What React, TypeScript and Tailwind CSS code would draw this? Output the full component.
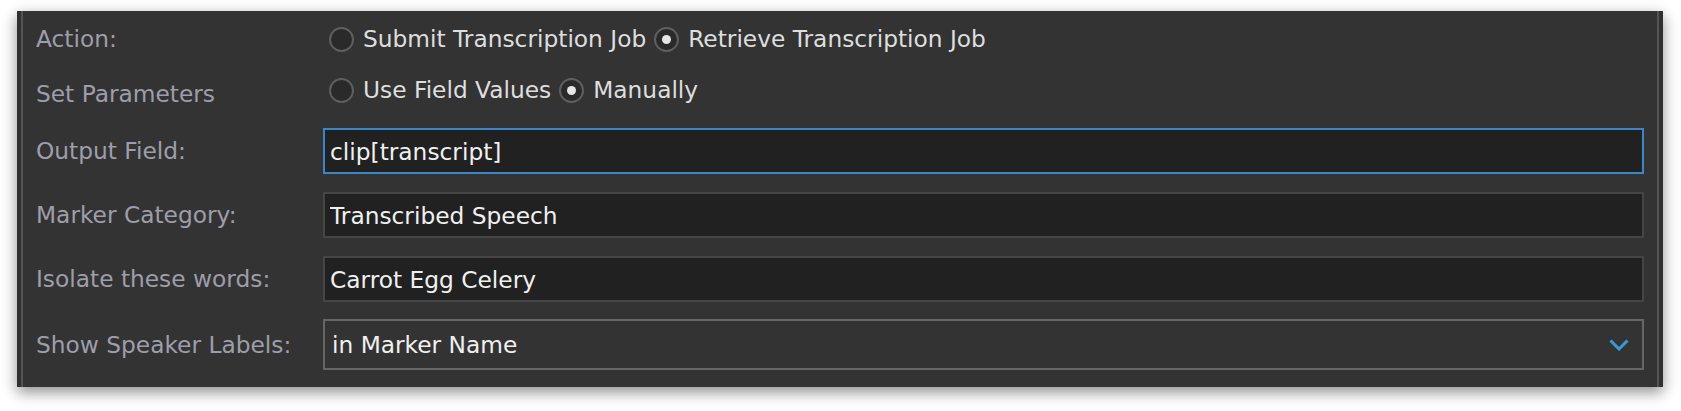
import { useState } from "react";

const Radio = ({ checked, label, onClick }: { checked: boolean; label: string; onClick: () => void }) => (
  <button type="button" onClick={onClick} className="flex items-center gap-[9px] mr-[8px]">
    <span className="flex items-center justify-center w-[25px] h-[25px] rounded-full border-2 border-[#5f5f5f] bg-[#2a2a2a]">
      {checked && <span className="w-[9px] h-[9px] rounded-full bg-[#e6e6e6]" />}
    </span>
    <span className="text-[#dedede]">{label}</span>
  </button>
);

const Label = ({ children, className = "" }: { children: string; className?: string }) => (
  <div className={`w-[287px] shrink-0 text-[#9e9eaa] ${className}`}>{children}</div>
);

export default function App() {
  const [action, setAction] = useState("retrieve");
  const [params, setParams] = useState("manual");
  const [output, setOutput] = useState("clip[transcript]");
  const [category, setCategory] = useState("Transcribed Speech");
  const [words, setWords] = useState("Carrot Egg Celery");

  return (
    <div className="w-[1681px] h-[411px] bg-white pt-[11px] pl-[17px] font-['DejaVu_Sans',sans-serif] text-[23.3px] leading-none">
      <div className="w-[1646px] h-[376px] bg-[#303030] px-[4px] shadow-[0_5px_14px_rgba(0,0,0,0.45)]">
        <div className="h-full bg-[#333333] border-x-2 border-[#545454] px-[13px] pt-[14px] flex flex-col">
          {/* Radio rows */}
          <div className="flex items-center h-[28px]">
            <Label>Action:</Label>
            <div className="flex items-center ml-[6px]">
              <Radio checked={action === "submit"} label="Submit Transcription Job" onClick={() => setAction("submit")} />
              <Radio checked={action === "retrieve"} label="Retrieve Transcription Job" onClick={() => setAction("retrieve")} />
            </div>
          </div>
          <div className="flex items-center h-[28px] mt-[23px]">
            <Label className="mt-[7px]">Set Parameters</Label>
            <div className="flex items-center ml-[6px]">
              <Radio checked={params === "fields"} label="Use Field Values" onClick={() => setParams("fields")} />
              <Radio checked={params === "manual"} label="Manually" onClick={() => setParams("manual")} />
            </div>
          </div>

          {/* Text fields */}
          <div className="flex items-center h-[46px] mt-[24px]">
            <Label>Output Field:</Label>
            <input
              value={output}
              onChange={(e) => setOutput(e.target.value)}
              className="flex-1 h-full bg-[#212121] border-2 border-[#3b86c6] px-[5px] text-[#f0f0f0] outline-none"
            />
          </div>
          <div className="flex items-center h-[46px] mt-[18px]">
            <Label>Marker Category:</Label>
            <input
              value={category}
              onChange={(e) => setCategory(e.target.value)}
              className="flex-1 h-full bg-[#212121] border-2 border-[#454545] px-[5px] text-[#f0f0f0] outline-none"
            />
          </div>
          <div className="flex items-center h-[46px] mt-[18px]">
            <Label>Isolate these words:</Label>
            <input
              value={words}
              onChange={(e) => setWords(e.target.value)}
              className="flex-1 h-full bg-[#212121] border-2 border-[#454545] px-[5px] text-[#f0f0f0] outline-none"
            />
          </div>

          {/* Select */}
          <div className="flex items-center h-[51px] mt-[17px]">
            <Label>Show Speaker Labels:</Label>
            <div className="flex-1 h-full flex items-center justify-between bg-[#333333] border-2 border-[#666666] pl-[7px] pr-[13px]">
              <span className="text-[#f0f0f0]">in Marker Name</span>
              <svg width="20" height="12" viewBox="0 0 20 12" fill="none">
                <path d="M1.5 1.5 L10 10 L18.5 1.5" stroke="#3a9ad9" strokeWidth="3" />
              </svg>
            </div>
          </div>
        </div>
      </div>
    </div>
  );
}
